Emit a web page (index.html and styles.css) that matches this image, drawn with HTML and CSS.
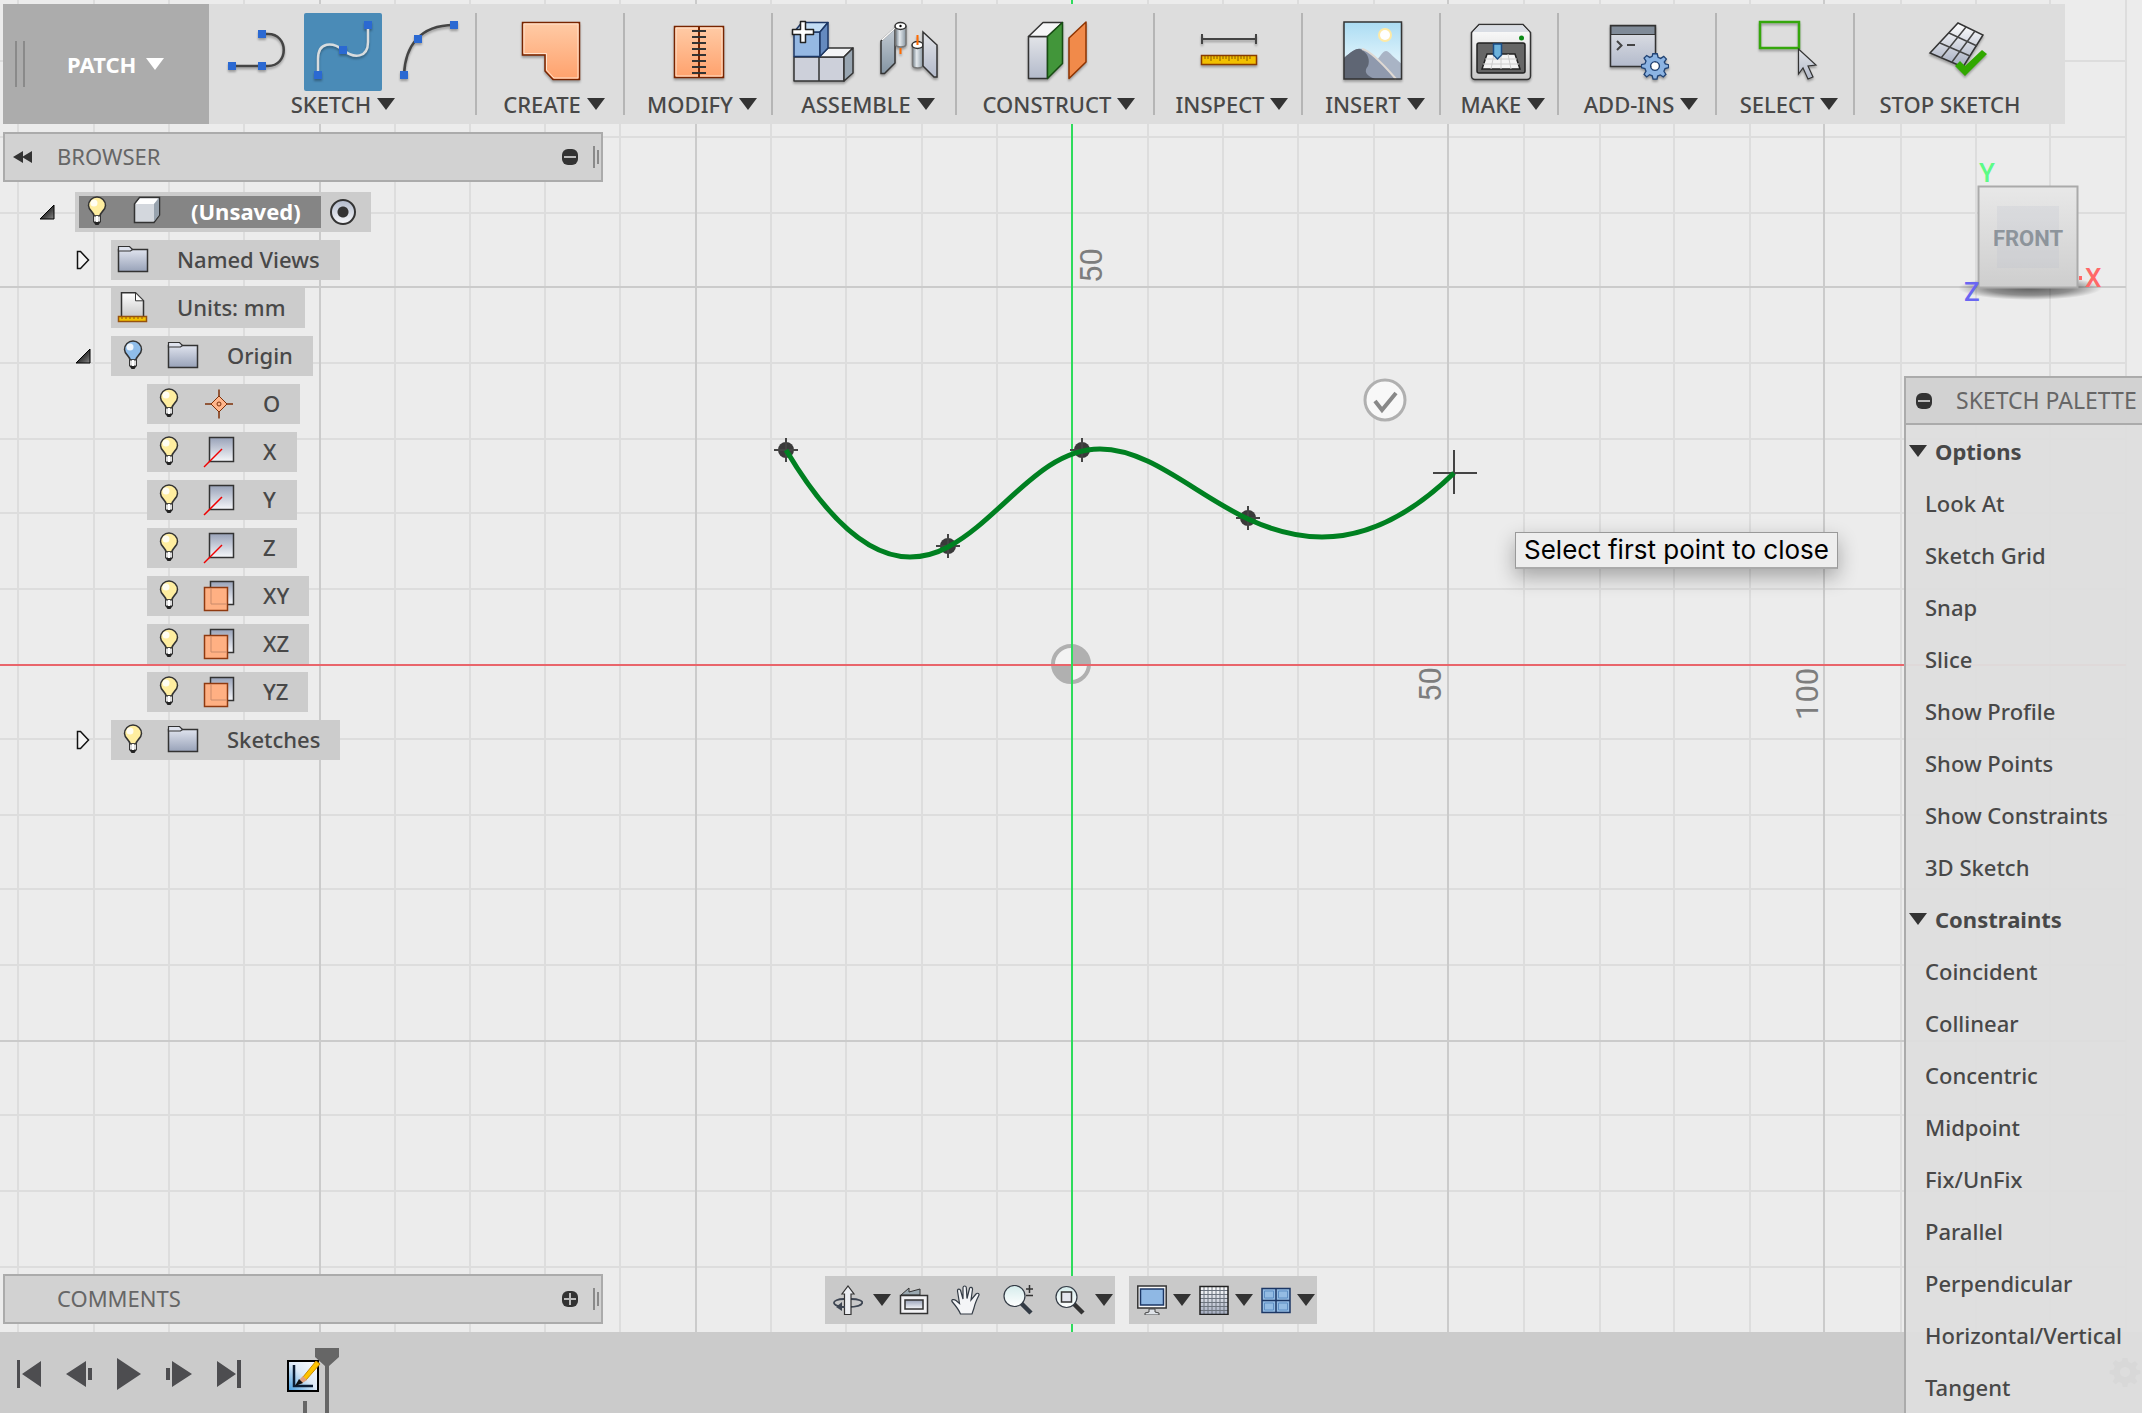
FILE: index.html
```html
<!DOCTYPE html>
<html lang="en">
<head>
<meta charset="utf-8">
<title>(Unsaved) - Patch workspace</title>
<link rel="stylesheet" href="styles.css">
</head>
<body>
<svg class="sprite" aria-hidden="true">
  <defs>
    <linearGradient id="peach" x1="0" y1="0" x2="0" y2="1"><stop offset="0" stop-color="#ffcba6"/><stop offset="1" stop-color="#ffa16c"/></linearGradient>
    <linearGradient id="steel" x1="0" y1="0" x2="0" y2="1"><stop offset="0" stop-color="#dfe3ee"/><stop offset="1" stop-color="#98a2b8"/></linearGradient>
    <linearGradient id="steelup" x1="0" y1="0" x2="0" y2="1"><stop offset="0" stop-color="#98a2b8"/><stop offset="1" stop-color="#f6f7fa"/></linearGradient>
    <linearGradient id="metal" x1="0" y1="0" x2="1" y2="0"><stop offset="0" stop-color="#75828c"/><stop offset=".4" stop-color="#e4e9ed"/><stop offset="1" stop-color="#8795a0"/></linearGradient>
    <linearGradient id="plate" x1="0" y1="0" x2="0" y2="1"><stop offset="0" stop-color="#c4ccd4"/><stop offset="1" stop-color="#8495a3"/></linearGradient>
    <linearGradient id="block" x1="0" y1="0" x2="0" y2="1"><stop offset="0" stop-color="#e2e4e8"/><stop offset="1" stop-color="#b3bacb"/></linearGradient>
    <linearGradient id="mesh" x1="0" y1="0" x2="0" y2="1"><stop offset="0" stop-color="#ffffff"/><stop offset="1" stop-color="#a4acc0"/></linearGradient>
    <linearGradient id="sky" x1="0" y1="0" x2="0" y2="1"><stop offset="0" stop-color="#abdcf3"/><stop offset=".6" stop-color="#d8f0fa"/><stop offset="1" stop-color="#e8f4fb"/></linearGradient>
    <linearGradient id="shell" x1="0" y1="0" x2="0" y2="1"><stop offset="0" stop-color="#ffffff"/><stop offset="1" stop-color="#c9c9c9"/></linearGradient>
    <linearGradient id="cubeface" x1="0" y1="0" x2="0" y2="1"><stop offset="0" stop-color="#e8e8e8"/><stop offset="1" stop-color="#cecece"/></linearGradient>
    <linearGradient id="glass" x1="0" y1="0" x2="0" y2="1"><stop offset="0" stop-color="#d5ecec"/><stop offset="1" stop-color="#ffffff"/></linearGradient>
    <radialGradient id="cubeshade"><stop offset="0" stop-color="#000" stop-opacity=".6"/><stop offset=".6" stop-color="#000" stop-opacity=".4"/><stop offset="1" stop-color="#000" stop-opacity="0"/></radialGradient>
    <linearGradient id="wedge" x1="0" y1="0" x2="1" y2="1"><stop offset=".3" stop-color="#111"/><stop offset="1" stop-color="#888"/></linearGradient>
    <linearGradient id="note" x1="1" y1="0" x2="0" y2="1"><stop offset="0" stop-color="#fff"/><stop offset=".5" stop-color="#dce9f6"/><stop offset="1" stop-color="#3f9be0"/></linearGradient>
  </defs>
  <symbol id="i-bulb" viewBox="0 0 32 32">
    <path d="M13 20C13 16 7.500 14.500 7.500 9.500a8.500 8.500 0 0 1 17 0C24.500 14.500 19 16 19 20z" fill="#ffeea0" stroke="#333" stroke-width="1.500"/>
    <circle cx="13" cy="7" r="3.500" fill="#fff" opacity=".85"/>
    <path d="M12.500 20h7v6h-7z" fill="#ddd" stroke="#333"/><path d="M16 20v6" stroke="#fff" stroke-width="2"/>
    <path d="M12.500 26h7l-2 3h-3z" fill="#222"/>
  </symbol>
  <symbol id="i-bulb-blue" viewBox="0 0 32 32">
    <path d="M13 20C13 16 7.500 14.500 7.500 9.500a8.500 8.500 0 0 1 17 0C24.500 14.500 19 16 19 20z" fill="#8fbdea" stroke="#333" stroke-width="1.500"/>
    <circle cx="13" cy="7" r="3.500" fill="#fff" opacity=".85"/>
    <path d="M12.500 20h7v6h-7z" fill="#ddd" stroke="#333"/><path d="M16 20v6" stroke="#fff" stroke-width="2"/>
    <path d="M12.500 26h7l-2 3h-3z" fill="#222"/>
  </symbol>
  <symbol id="i-folder" viewBox="0 0 32 32">
    <path d="M1.500 27.500V5.500h29v22z" fill="url(#steel)" stroke="#333" stroke-width="1.500"/>
    <path d="M1.500 7V2.500h11l3 3-2 1.500z" fill="#dfe3ee" stroke="#333" stroke-width="1.200"/>
  </symbol>
  <symbol id="i-doc" viewBox="0 0 32 32">
    <path d="M4.500 25V.8h14l8 8V25z" fill="url(#shell)" stroke="#333" stroke-width="1.500"/>
    <path d="M18.500.8v8h8z" fill="#fff" stroke="#333"/>
    <path d="M1.500 24.500h28v5h-28z" fill="#f2c200" stroke="#96520f" stroke-width="1.500"/>
    <path d="M5 25v2m4-2v2m4-2v2m4-2v2m4-2v2m4-2v2" stroke="#96520f"/>
  </symbol>
  <symbol id="i-cube" viewBox="0 0 32 32">
    <path d="M3.500 8l5-6.500h20V19L23 26.500H3.500z" fill="#d3d7dd" stroke="#333" stroke-width="1.500"/>
    <path d="M4.500 8l4.500-5.500h18L23 8z" fill="#fff"/><path d="M23 8l5-6v17l-5 6.500z" fill="#98a3ae"/>
  </symbol>
  <symbol id="i-origin" viewBox="0 0 32 32">
    <path d="M16 1.500v29M2 16h28" stroke="#7e3008" stroke-width="1.500"/>
    <path d="M16 8l8 8-8 8-8-8z" fill="#ffb68c" stroke="#7e3008"/><circle cx="16" cy="16" r="2" fill="none" stroke="#7e3008"/>
  </symbol>
  <symbol id="i-axis" viewBox="0 0 32 32">
    <path d="M6.500 1.500h24v24h-24z" fill="url(#steelup)" stroke="#333" stroke-width="1.500"/>
    <path d="M1 31L19 13" stroke="#f00000" stroke-width="1.500"/>
  </symbol>
  <symbol id="i-plane" viewBox="0 0 32 32">
    <path d="M7.500 1.500h23v23h-23z" fill="url(#steelup)" stroke="#333" stroke-width="1.500"/>
    <path d="M1.500 7.500h23v23h-23z" fill="#ffb083" stroke="#8f3a10" stroke-width="1.500"/>
    <path d="M8 8v16h16" fill="none" stroke="#c98a6a"/>
  </symbol>
  <symbol id="i-gear" viewBox="-16 -16 32 32">
    <path fill-rule="evenodd" d="M-2.500-14h5l1 4 3 1.300L10-11l3 3-2.400 3.500L11.800-2.500l3.700 1v3.500l-4 1-1.300 3L12.500 9.500l-3 3L6 10.200 3 11.500 2.300 15h-4.500l-1-3.800-3-1.200L-9.500 12.500l-3-3 2.200-3.500L-11.500 3l-4-1v-3.500l4-1 1.200-3L-12.500-9l3-3L-6-9.800l2.700-1.200zM0-5a5 5 0 1 0 .01 0z"/>
  </symbol>
  <symbol id="i-caret" viewBox="0 0 18 12"><path d="M0 0h18L9 12z"/></symbol>
</svg>

<div class="app">
  <svg class="viewport" viewBox="0 0 2142 1332" preserveAspectRatio="xMidYMid slice" role="img" aria-label="Sketch canvas">
    <g class="grid-minor" shape-rendering="crispEdges">
      <path d="M18 0V1332M94 0V1332M169 0V1332M244 0V1332M395 0V1332M470 0V1332M545 0V1332M620 0V1332M771 0V1332M846 0V1332M922 0V1332M997 0V1332M1148 0V1332M1223 0V1332M1298 0V1332M1374 0V1332M1524 0V1332M1600 0V1332M1674 0V1332M1750 0V1332M1901 0V1332M1976 0V1332M2050 0V1332M2126 0V1332"/>
      <path d="M0 61H2126M0 137H2126M0 213H2126M0 363H2126M0 439H2126M0 513H2126M0 589H2126M0 739H2126M0 815H2126M0 889H2126M0 965H2126M0 1115H2126M0 1191H2126M0 1267H2126"/>
    </g>
    <path class="grid-major" shape-rendering="crispEdges" d="M320 0V1332M696 0V1332M1448 0V1332M1824 0V1332M0 287H2126M0 1041H2126"/>
    <circle cx="1071" cy="664" r="18" fill="#f3f3f3" stroke="#b0b0b0" stroke-width="4"/>
    <path d="M1072 664V646a18 18 0 0 1 18 18zM1071 664V682a18 18 0 0 1-18-18z" fill="#b0b0b0"/>
    <path class="axis-x" shape-rendering="crispEdges" d="M0 665H2126"/>
    <path class="axis-y" shape-rendering="crispEdges" d="M1072 0V1332"/>
    <g class="axis-label">
      <text transform="translate(1102 283) rotate(-90)">50</text>
      <text transform="translate(1441 702) rotate(-90)">50</text>
      <text transform="translate(1818 720) rotate(-90)">100</text>
    </g>
    <g class="points">
      <circle cx="786" cy="450" r="8"/><circle cx="948" cy="546" r="8"/><circle cx="1082" cy="450" r="8"/><circle cx="1248" cy="518" r="8"/>
      <path d="M774 450h24M786 438v24M936 546h24M948 534v24M1070 450h24M1082 438v24M1236 518h24M1248 506v24M1433 473h44M1454 450v44"/>
    </g>
    <path class="spline" d="M786 450C820 507 862 557 910 557C924 557 937 553 948 547C1002 518 1040 449 1100 449C1150 449 1196 495 1248 519C1274 531 1298 537 1322 537C1370 537 1414 512 1454 473"/>
    <circle cx="1385" cy="400" r="20" fill="#f8f8f8" stroke="#b0b0b0" stroke-width="3"/>
    <path d="M1375 401l7 9 14-17" fill="none" stroke="#888" stroke-width="4"/>
  </svg>

  <header class="toolbar">
    <button class="workspace-switch" type="button"><span class="grip"></span><span>PATCH</span><svg class="caret"><use href="#i-caret"/></svg></button>

    <div class="group">
      <div class="tools">
        <button type="button" aria-label="Line"><svg viewBox="0 0 78 78"><path d="M13 53H49C70 53 70 21 49 21H43" fill="none" stroke="#444" stroke-width="2.500"/><path d="M9 49h8v8H9zM39 49h8v8h-8zM39 17h8v8h-8z" fill="#2b69d2"/></svg></button>
        <button type="button" class="active" aria-label="Spline"><svg viewBox="0 0 78 78"><path d="M14 62V46C14 28 29 29 39 37C50 46 64 45 64 29V12" fill="none" stroke="#d8dcde" stroke-width="2.500"/><path d="M10 58h8v8h-8zM35 33h8v8h-8zM60 8h8v8h-8z" fill="#2b69d2"/></svg></button>
        <button type="button" aria-label="Arc"><svg viewBox="0 0 78 78"><path d="M15 62C16 34 30 12 65 12" fill="none" stroke="#444" stroke-width="2.500"/><path d="M11 58h8v8h-8zM25 22h8v8h-8zM61 8h8v8h-8z" fill="#2b69d2"/></svg></button>
      </div>
      <button class="menu" type="button">SKETCH<svg class="caret"><use href="#i-caret"/></svg></button>
    </div>
    <div class="group">
      <div class="tools"><button type="button" aria-label="Patch"><svg viewBox="0 0 78 78"><path d="M10.500 9.500h57v57H41L33 58V42H10.500z" fill="url(#peach)" stroke="#772400" stroke-width="1.500"/><path d="M12 11h54v54H42l-7.500-8V40.500H12z" fill="none" stroke="#ffe2ce"/></svg></button></div>
      <button class="menu" type="button">CREATE<svg class="caret"><use href="#i-caret"/></svg></button>
    </div>
    <div class="group">
      <div class="tools"><button type="button" aria-label="Stitch"><svg viewBox="0 0 78 78"><path d="M14.500 13.500h49v51h-49z" fill="url(#peach)" stroke="#772400" stroke-width="1.500"/><path d="M16 15h46v48H16z" fill="none" stroke="#ffe2ce"/><path d="M39 13v52" stroke="#772400" stroke-width="2"/><path d="M32 18h14M32 24h14M32 30h14M32 36h14M32 42h14M32 48h14M32 54h14M32 60h14" stroke="#333" stroke-width="2.200"/></svg></button></div>
      <button class="menu" type="button">MODIFY<svg class="caret"><use href="#i-caret"/></svg></button>
    </div>
    <div class="group">
      <div class="tools">
        <button type="button" aria-label="New component"><svg viewBox="0 0 78 78" stroke-linejoin="round"><g stroke="#333" stroke-width="1.500"><path d="M10 44h25v24H10zM35 44h25v24H35z" fill="#cdd0da"/><path d="M35 44l9-9h25l-9 9z" fill="#f3f4f6"/><path d="M60 44l9-9v25l-9 8z" fill="#98a5b1"/></g><g stroke="#1c3765" stroke-width="1.500"><path d="M10 19h26v24.500H10z" fill="#95b8e3"/><path d="M10 19l8-9.500h26L36 19z" fill="#c3ddf4"/><path d="M36 19l8-9.500V35l-8 8.500z" fill="#658abf"/></g><path d="M16.500 8.500h5v8h8v5h-8v8h-5v-8h-8v-5h8z" fill="#fff" stroke="#222" stroke-width="1.500"/></svg></button>
        <button type="button" aria-label="Joint"><svg viewBox="0 0 78 78"><g stroke="#333" stroke-width="1.500"><path d="M12 28L26 15V50L15.500 60.500H12z" fill="url(#plate)"/><path d="M13 27L26 15" stroke="#fff"/><path d="M26.500 13v18c0 4 10.500 4 10.500 0V13" fill="url(#metal)" stroke="#777"/><ellipse cx="31.500" cy="13" rx="5.500" ry="3.500" fill="#fff"/><path d="M43.500 32v20c0 4 10.500 4 10.500 0V32" fill="url(#metal)" stroke="#777"/><ellipse cx="48.500" cy="32" rx="5.500" ry="3.500" fill="#fff"/><path d="M54 19L68 32V64H65L54 53z" fill="url(#block)"/></g><circle cx="31.500" cy="13" r="1.200"/><path d="M31.500 35v6M48.500 22v10" stroke="#ff6a00" stroke-width="2"/></svg></button>
      </div>
      <button class="menu" type="button">ASSEMBLE<svg class="caret"><use href="#i-caret"/></svg></button>
    </div>
    <div class="group">
      <div class="tools"><button type="button" aria-label="Offset plane"><svg viewBox="0 0 78 78" stroke-linejoin="round"><g stroke="#333" stroke-width="1.500"><path d="M11.500 23.500h19v42h-19z" fill="url(#block)"/><path d="M11.500 23.500L26 9.500h19.500l-15 14z" fill="#f5f6f7"/><path d="M30.500 23.500l15-14v41l-15 15z" fill="#42963a" stroke="#174c13"/></g><path d="M52 25L69 9v40L52 65.500z" fill="#f18a4a" stroke="#8e3300" stroke-width="1.500"/></svg></button></div>
      <button class="menu" type="button">CONSTRUCT<svg class="caret"><use href="#i-caret"/></svg></button>
    </div>
    <div class="group">
      <div class="tools"><button type="button" aria-label="Measure"><svg viewBox="0 0 78 78"><path d="M12 26h54M12 21v10M66 21v10" stroke="#444" stroke-width="2"/><path d="M11.500 42.500h55v9h-55z" fill="#f2c000" stroke="#8a3c00" stroke-width="1.500"/><path d="M15 43v3m3-3v3m3-3v5m3-5v3m3-3v3m3-3v5m3-5v3m3-3v3m3-3v5m3-5v3m3-3v3m3-3v5m3-5v3m3-3v3m3-3v5m3-5v3" stroke="#8a5a00"/></svg></button></div>
      <button class="menu" type="button">INSPECT<svg class="caret"><use href="#i-caret"/></svg></button>
    </div>
    <div class="group">
      <div class="tools"><button type="button" aria-label="Attached canvas"><svg viewBox="0 0 78 78"><path d="M11 9h58v57H11z" fill="url(#sky)"/><circle cx="52" cy="22" r="7" fill="#ffeaa5"/><circle cx="52" cy="22" r="5" fill="#fff"/><path d="M42 50C48 42 50 38 53 38C56 38 62 46 69 51V66H48z" fill="#a9b4c5"/><path d="M11 45C19 38 24 35 29 36C36 37 50 51 62 66H11z" fill="#8f99ad"/><path d="M11 45C19 38 24 35 27 36C36 40 37 48 35 53C31 58 32 62 42 66H11z" fill="#5f6674"/><path d="M29 36C36 37 50 51 63 66" stroke="#dfd9d3" stroke-width="2" fill="none"/><path d="M11 9h57.500v57H11z" fill="none" stroke="#333" stroke-width="1.500"/></svg></button></div>
      <button class="menu" type="button">INSERT<svg class="caret"><use href="#i-caret"/></svg></button>
    </div>
    <div class="group">
      <div class="tools"><button type="button" aria-label="3D print"><svg viewBox="0 0 78 78"><path d="M18 11.500h44l7.500 8V63a3.500 3.500 0 0 1-3.500 3.500H14A3.500 3.500 0 0 1 10.500 63V19.500z" fill="url(#shell)" stroke="#333" stroke-width="1.500"/><path d="M12 19l6.500-6.500h43L68 19z" fill="#d9dde4"/><circle cx="60.500" cy="25" r="2.500" fill="#0a8a14"/><rect x="16" y="30" width="48" height="30" rx="2" fill="#666" stroke="#222" stroke-width="1.500"/><path d="M26 41h28l5 15H21z" fill="#f3f3f3" stroke="#222" stroke-width="1.500"/><path d="M24 46h32M22 51h36M33 41l-3 15M40 41v15M47 41l3 15" stroke="#ccc"/><path d="M32.500 31h8v11l-4 4-4-4z" fill="#6cb2dc" stroke="#1a4e86" stroke-width="1.500"/></svg></button></div>
      <button class="menu" type="button">MAKE<svg class="caret"><use href="#i-caret"/></svg></button>
    </div>
    <div class="group">
      <div class="tools"><button type="button" aria-label="Scripts and add-ins"><svg viewBox="0 0 78 78"><path d="M11.500 12.500h45v41h-45z" fill="url(#block)" stroke="#333" stroke-width="1.500"/><path d="M12 13h44v8.500H12z" fill="#808b98" stroke="#333"/><path d="M18 28l4.500 4.500L18 37M28 32h8" fill="none" stroke="#444" stroke-width="2"/><use href="#i-gear" x="42" y="39" width="28" height="28" fill="#8cb4e3" stroke="#214374" stroke-width="1.500"/><circle cx="56" cy="53" r="3.500" fill="#fff"/></svg></button></div>
      <button class="menu" type="button">ADD-INS<svg class="caret"><use href="#i-caret"/></svg></button>
    </div>
    <div class="group">
      <div class="tools"><button type="button" aria-label="Select"><svg viewBox="0 0 78 78"><path d="M13 9h39v26H13z" fill="none" stroke="#35a70c" stroke-width="2.500"/><path d="M51.500 36L69 52l-8 1 5 11-5 2-5-11-4.500 6z" fill="url(#block)" stroke="#333" stroke-width="1.200"/></svg></button></div>
      <button class="menu" type="button">SELECT<svg class="caret"><use href="#i-caret"/></svg></button>
    </div>
    <div class="group last">
      <div class="tools"><button type="button" aria-label="Stop sketch"><svg viewBox="0 0 78 78"><path d="M47 10l25 12-20 32-33-14z" fill="url(#mesh)" stroke="#333" stroke-width="1.500"/><path d="M38 20l28 13M29 30l30 13M55 14L30 45M64 18L41 49" stroke="#444" stroke-width="1.500"/><path d="M44 53l5-5 5 5 17-16 5 4-22 22z" fill="#31a800"/></svg></button></div>
      <button class="menu" type="button">STOP SKETCH</button>
    </div>
  </header>

  <main class="workspace">
    <section class="browser" aria-label="Browser">
      <div class="panel-bar">
        <button type="button" class="collapse" aria-label="Collapse"><svg width="19" height="12" viewBox="0 0 19 12"><path d="M10 0v12L0 6zM19 0v12L9 6z" fill="#333"/></svg></button>
        <h2>BROWSER</h2>
        <button type="button" class="round" aria-label="Minimize"><svg viewBox="0 0 16 16"><rect width="16" height="16" rx="6" fill="#333"/><path d="M2 8h12" stroke="#bbb" stroke-width="2"/></svg></button>
        <span class="edge"></span>
      </div>
      <ul class="tree">
        <li>
          <div class="row"><button class="twist" type="button" aria-label="Collapse"><svg width="16" height="16"><path d="M15 1v14H1z" fill="url(#wedge)" stroke="#000"/></svg></button>
            <label class="node root"><span class="root-name"><svg><use href="#i-bulb"/></svg><svg><use href="#i-cube"/></svg><span class="name">(Unsaved)</span></span><input type="radio" name="active" checked></label></div>
          <ul>
            <li><div class="row"><button class="twist" type="button" aria-label="Expand"><svg width="16" height="20"><path d="M2.500 1.500h3l8 8.500-8 8.500h-3z" fill="#f4f4f4" stroke="#111" stroke-width="1.500"/></svg></button><div class="node"><svg><use href="#i-folder"/></svg><span class="name">Named Views</span></div></div></li>
            <li><div class="row"><span class="twist"></span><div class="node"><svg><use href="#i-doc"/></svg><span class="name">Units: mm</span></div></div></li>
            <li><div class="row"><button class="twist" type="button" aria-label="Collapse"><svg width="16" height="16"><path d="M15 1v14H1z" fill="url(#wedge)" stroke="#000"/></svg></button><div class="node"><svg><use href="#i-bulb-blue"/></svg><svg><use href="#i-folder"/></svg><span class="name">Origin</span></div></div>
              <ul>
                <li><div class="node"><svg><use href="#i-bulb"/></svg><svg><use href="#i-origin"/></svg><span class="name">O</span></div></li>
                <li><div class="node"><svg><use href="#i-bulb"/></svg><svg><use href="#i-axis"/></svg><span class="name">X</span></div></li>
                <li><div class="node"><svg><use href="#i-bulb"/></svg><svg><use href="#i-axis"/></svg><span class="name">Y</span></div></li>
                <li><div class="node"><svg><use href="#i-bulb"/></svg><svg><use href="#i-axis"/></svg><span class="name">Z</span></div></li>
                <li><div class="node"><svg><use href="#i-bulb"/></svg><svg><use href="#i-plane"/></svg><span class="name">XY</span></div></li>
                <li><div class="node"><svg><use href="#i-bulb"/></svg><svg><use href="#i-plane"/></svg><span class="name">XZ</span></div></li>
                <li><div class="node"><svg><use href="#i-bulb"/></svg><svg><use href="#i-plane"/></svg><span class="name">YZ</span></div></li>
              </ul>
            </li>
            <li><div class="row"><button class="twist" type="button" aria-label="Expand"><svg width="16" height="20"><path d="M2.500 1.500h3l8 8.500-8 8.500h-3z" fill="#f4f4f4" stroke="#111" stroke-width="1.500"/></svg></button><div class="node"><svg><use href="#i-bulb"/></svg><svg><use href="#i-folder"/></svg><span class="name">Sketches</span></div></div></li>
          </ul>
        </li>
      </ul>
    </section>

    <div class="dock">
      <div class="panel-bar">
        <span class="collapse"></span>
        <h2>COMMENTS</h2>
        <button type="button" class="round" aria-label="Expand"><svg viewBox="0 0 16 16"><rect width="16" height="16" rx="6" fill="#333"/><path d="M2 8h12M8 2v12" stroke="#bbb" stroke-width="2"/></svg></button>
        <span class="edge"></span>
      </div>
      <nav class="view-tools" aria-label="View">
        <div class="view-set">
          <button type="button" class="split" aria-label="Orbit"><svg class="icon" viewBox="0 0 30 30"><path d="M18 14C34 14 33 22 15 22C-4 22-2 14 11 14" fill="none" stroke="#3d4552" stroke-width="1.800"/><path d="M11.500 29.500V9H9l6-8 6 8h-3v20.500z" fill="#eceef2" stroke="#333" stroke-width="1.200"/><path d="M12 22h-4" stroke="#3d4552" stroke-width="1.800"/><path d="M9 17v9l-6-4z" fill="#3d4552"/></svg><svg class="caret"><use href="#i-caret"/></svg></button>
          <button type="button" aria-label="Look at"><svg class="icon" viewBox="0 0 30 30"><path d="M2 10L10 3v4l11-3v6z" fill="#9aa8b0" stroke="#333"/><path d="M1.500 10.500h27v18h-27z" fill="#f2f2f4" stroke="#333" stroke-width="1.500"/><path d="M6 15h18v9H6z" fill="url(#steelup)" stroke="#333" stroke-width="1.500"/></svg></button>
          <button type="button" aria-label="Pan"><svg class="icon" viewBox="0 0 30 30"><path d="M9.500 29C8 25 4 20 1 16.500C0 14.500 3 14 5 15.500L8.500 18.500L6.500 6C6.300 3.500 9 3.500 9.600 5.500L12 14V2.500C12.300.5 15 .5 15.300 2.500L16 13.500L18.500 3.500C19 1.500 21.800 2.300 21.500 4.500L20 15L25 9C26.500 7.500 28.800 8.500 27.800 10.500C26 14 24 18 23 23L21 29z" fill="#f4f5f7" stroke="#333b45" stroke-width="1.200"/></svg></button>
          <button type="button" aria-label="Zoom"><svg class="icon" viewBox="0 0 30 30"><path d="M18 18l10 10" stroke="#333b45" stroke-width="4.500"/><circle cx="11.500" cy="11" r="10.500" fill="url(#glass)" stroke="#333b45" stroke-width="1.200"/><path d="M23 4h7M26.500 0v8M23 10.500h7" stroke="#333" stroke-width="1.500"/></svg></button>
          <button type="button" class="split" aria-label="Zoom window"><svg class="icon" viewBox="0 0 30 30"><path d="M18 18l10 10" stroke="#333" stroke-width="4.500"/><circle cx="11.500" cy="12" r="10.500" fill="url(#glass)" stroke="#333b45" stroke-width="1.200"/><path d="M6.500 7h10v10h-10z" fill="#e3e5ee" stroke="#333" stroke-width="1.500"/></svg><svg class="caret"><use href="#i-caret"/></svg></button>
        </div>
        <div class="view-set">
          <button type="button" class="split" aria-label="Display settings"><svg class="icon" viewBox="0 0 30 30"><path d="M.8 1h28.400v22H.8z" fill="#f7f7f7" stroke="#333" stroke-width="1.500"/><path d="M3.500 4h23v16h-23z" fill="#8fb8e4" stroke="#1c3765" stroke-width="1.500"/><path d="M12 24h6v3l4 1v2H8v-2l4-1z" fill="#dfe3e8" stroke="#444"/></svg><svg class="caret"><use href="#i-caret"/></svg></button>
          <button type="button" class="split" aria-label="Grid and snaps"><svg class="icon" viewBox="0 0 30 30"><path d="M1 1.500h28v28H1z" fill="url(#mesh)"/><path d="M1 5.500h28M1 9.500h28M1 13.500h28M1 17.500h28M1 21.500h28M1 25.500h28M5 1v28M9 1v28M13 1v28M17 1v28M21 1v28M25 1v28" stroke="#6d747f" stroke-width="1"/><path d="M1 1.500h28v28H1z" fill="none" stroke="#222" stroke-width="1.500"/></svg><svg class="caret"><use href="#i-caret"/></svg></button>
          <button type="button" class="split" aria-label="Viewports"><svg class="icon" viewBox="0 0 30 30"><path d="M1 3.500h28v24H1z" fill="#94bce3" stroke="#1c3765" stroke-width="1.500"/><path d="M15 3.500v24M1 15.500h28" stroke="#1c3765" stroke-width="1.500"/><path d="M3.500 6h9v7h-9zM17.500 6h9v7h-9zM3.500 18h9v7h-9zM17.500 18h9v7h-9z" fill="none" stroke="#5f8fc4"/></svg><svg class="caret"><use href="#i-caret"/></svg></button>
        </div>
      </nav>
    </div>
  </main>

  <aside class="side">
    <svg class="viewcube" viewBox="0 0 238 252" role="img" aria-label="View cube, front">
      <ellipse cx="126" cy="164" rx="72" ry="12" fill="url(#cubeshade)"/>
      <path d="M74.500 62.500h99v101h-99z" fill="url(#cubeface)" stroke="#aaa" stroke-width="2"/>
      <path d="M93 82h62v62H93z" fill="#b9bfcb" opacity=".22"/>
      <text class="face" x="124" y="122" text-anchor="middle">FRONT</text>
      <text class="letter" x="75" y="58" fill="#5dfb86">Y</text>
      <text class="letter" x="181" y="163" fill="#ff6868">X</text>
      <path d="M175 152h3v4h-3z" fill="#ff6868"/>
      <text class="letter" x="60" y="177" fill="#6a66f2">Z</text>
    </svg>
    <section class="palette" aria-label="Sketch palette">
      <header><button type="button" class="round" aria-label="Minimize"><svg viewBox="0 0 16 16"><rect width="16" height="16" rx="6" fill="#333"/><path d="M2 8h12" stroke="#bbb" stroke-width="2"/></svg></button><h2>SKETCH PALETTE</h2></header>
      <button type="button" class="section"><svg class="caret"><use href="#i-caret"/></svg>Options</button>
      <button type="button">Look At</button>
      <button type="button">Sketch Grid</button>
      <button type="button">Snap</button>
      <button type="button">Slice</button>
      <button type="button">Show Profile</button>
      <button type="button">Show Points</button>
      <button type="button">Show Constraints</button>
      <button type="button">3D Sketch</button>
      <button type="button" class="section"><svg class="caret"><use href="#i-caret"/></svg>Constraints</button>
      <button type="button">Coincident</button>
      <button type="button">Collinear</button>
      <button type="button">Concentric</button>
      <button type="button">Midpoint</button>
      <button type="button">Fix/UnFix</button>
      <button type="button">Parallel</button>
      <button type="button">Perpendicular</button>
      <button type="button">Horizontal/Vertical</button>
      <button type="button">Tangent</button>
    </section>
  </aside>

  <footer class="timeline">
    <div class="transport">
      <button type="button" aria-label="Go to start"><svg viewBox="0 0 26 32"><path d="M1 2h3v28H1zM25 3v26L6 16z"/></svg></button>
      <button type="button" aria-label="Step back"><svg viewBox="0 0 26 32"><path d="M22 10h4v12h-4zM20 3v26L0 16z"/></svg></button>
      <button type="button" aria-label="Play"><svg viewBox="0 0 26 32"><path d="M1 0v32L25 16z"/></svg></button>
      <button type="button" aria-label="Step forward"><svg viewBox="0 0 26 32"><path d="M0 10h4v12H0zM6 3v26l20-13z"/></svg></button>
      <button type="button" aria-label="Go to end"><svg viewBox="0 0 26 32"><path d="M21 2h4v28h-4zM1 3v26l19-13z"/></svg></button>
    </div>
    <button class="feature" type="button" aria-label="Sketch1"><svg width="54" height="65" viewBox="0 0 54 65"><path d="M1 13h30v30H1z" fill="url(#note)" stroke="#000" stroke-width="2"/><path d="M7 17v21h19" fill="none" stroke="#0b1c33" stroke-width="2.500"/><path d="M16 29l13-16 4 3-14 16z" fill="#ffc400" stroke="#c98a00"/><path d="M12 32l4-4 4 4-6 4z" fill="#e0a07c"/><path d="M8 38l4-7 4 4z" fill="#111"/><path d="M16 53h4v12h-4z" fill="#666"/><path d="M28 0h24v9L42 18v47h-4V18L28 9z" fill="#666"/></svg></button>
    <button class="settings" type="button" aria-label="Timeline settings"><svg width="32" height="32"><use href="#i-gear"/></svg></button>
  </footer>

  <div class="hint" role="tooltip">Select first point to close</div>
</div>
</body>
</html>
```

FILE: styles.css
```css
* { box-sizing: border-box; }

body {
  margin: 0;
  background: #ececec;
  color: #484848;
  font: 500 22px/28px "Noto Sans", "Open Sans", sans-serif;
}

button {
  margin: 0;
  padding: 0;
  border: 0;
  background: none;
  color: inherit;
  font: inherit;
}

h2 {
  margin: 0;
  padding-bottom: 2px;
  color: #666;
  font-size: 22px;
  font-weight: 400;
  white-space: nowrap;
}

ul {
  margin: 0;
  padding: 0;
  list-style: none;
}

svg { display: block; }

.sprite {
  position: absolute;
  width: 0;
  height: 0;
}

.app {
  position: relative;
  display: grid;
  grid-template-columns: minmax(0, 1fr) 238px;
  grid-template-rows: auto minmax(0, 1fr) 81px;
  min-height: 100vh;
  overflow: hidden;
}

.caret {
  flex: none;
  width: 18px;
  height: 12px;
  fill: #333;
}

/* Drawing canvas behind the panels */
.viewport {
  position: absolute;
  top: 0;
  left: 0;
  width: 100%;
  height: calc(100% - 81px);
}

.grid-minor { stroke: #dddddd; stroke-width: 2; }
.grid-major { stroke: #cbcbcb; stroke-width: 2; }
.axis-x { stroke: #e9656b; stroke-width: 2; }
.axis-y { stroke: #2edb5c; stroke-width: 2; }

.axis-label {
  fill: #7d7d7d;
  font: 400 31px "Liberation Sans Narrow", Roboto, sans-serif;
}

.points { fill: #3a3a3a; stroke: #444; stroke-width: 2; }
.points circle { stroke: none; }
.spline { fill: none; stroke: #008021; stroke-width: 5; }

/* Toolbar */
.toolbar {
  position: relative;
  grid-column: 1 / -1;
  display: grid;
  grid-template-columns: 206px 268px 148px 148px 184px 198px 148px 138px 118px 158px 138px 210px;
  justify-self: start;
  height: 120px;
  margin: 4px 0 0 3px;
  background: #dddddd;
}

.workspace-switch {
  display: flex;
  align-items: center;
  gap: 10px;
  padding-left: 12px;
  background: #acacac;
  color: #fff;
  font-weight: 700;
}

.workspace-switch .caret { fill: #fff; }

.grip {
  width: 10px;
  height: 46px;
  margin-right: 32px;
  border: solid #8a8a8a;
  border-width: 0 2px;
}

.group {
  display: flex;
  flex-direction: column;
  align-items: center;
  padding-top: 9px;
  background: linear-gradient(#b5b5b5, #b5b5b5) right 9px / 2px 102px no-repeat;
}

.group.last {
  padding-right: 20px;
  background: none;
}

.tools {
  display: flex;
  gap: 7px;
}

.tools button {
  width: 78px;
  height: 78px;
  border-radius: 2px;
}

.tools svg { filter: drop-shadow(0 2px 1px rgba(0, 0, 0, .3)); }
.tools .active { background: #4a8bb7; }

.menu {
  display: flex;
  align-items: center;
  gap: 6px;
  line-height: 26px;
  white-space: nowrap;
}

.group + .group:not(.last) .menu { padding-left: 6px; }

/* Workspace */
.workspace {
  position: relative;
  grid-row: 2;
  grid-column: 1 / -1;
  display: flex;
  flex-direction: column;
  justify-content: space-between;
  padding: 8px 3px;
}

.panel-bar {
  display: flex;
  align-items: center;
  width: 600px;
  height: 50px;
  padding: 0 2px 0 8px;
  border: 2px solid #ababab;
  background: #d2d2d2;
}

.panel-bar h2 { flex: 1; }
.collapse { width: 44px; }

.round {
  width: 16px;
  height: 16px;
}

.edge {
  width: 6px;
  height: 22px;
  margin-left: 15px;
  border-left: 2px solid #8a8a8a;
  background: linear-gradient(#8a8a8a, #8a8a8a) right center / 2px 14px no-repeat;
}

.tree {
  margin: 10px 0 0 36px;
}

.tree ul { padding-left: 36px; }
.tree ul ul { padding-left: 72px; }
.row { display: flex; }

.twist {
  display: flex;
  align-items: center;
  width: 36px;
  height: 40px;
}

.node {
  display: flex;
  align-items: center;
  gap: 18px;
  width: max-content;
  min-width: 150px;
  height: 40px;
  margin-bottom: 8px;
  padding: 0 20px 0 6px;
  background: #cccccc;
}

.node svg {
  width: 32px;
  height: 32px;
}

.name {
  margin-left: 10px;
  padding-bottom: 2px;
}

.root {
  gap: 9px;
  padding: 4px 15px 4px 4px;
}

.root-name {
  display: flex;
  align-items: center;
  gap: 18px;
  height: 32px;
  padding: 0 20px 0 2px;
  background: #858585;
  color: #fff;
  font-weight: 700;
}

.root input {
  appearance: none;
  width: 26px;
  height: 26px;
  margin: 0;
  border: 2px solid #333;
  border-radius: 50%;
  background: radial-gradient(circle, #333 0 5px, transparent 6px), linear-gradient(#b4bccd, #f4f5f8);
}

.dock {
  display: grid;
  grid-template-columns: minmax(0, 1fr) auto minmax(0, 1fr);
  align-items: end;
}

.view-tools {
  display: flex;
  gap: 14px;
}

.view-set {
  display: flex;
  align-items: center;
  gap: 22px;
  height: 48px;
  padding: 0 2px 0 8px;
  background: #c9c9c9;
}

.view-set + .view-set { gap: 8px; }
.icon { width: 30px; height: 30px; }

.split {
  display: flex;
  align-items: center;
  gap: 6px;
}

.view-set:first-child .split { gap: 10px; }
.view-set:first-child .split:first-child { margin-right: -14px; }

/* View cube and palette */
.side {
  position: relative;
  grid-row: 2 / 4;
  grid-column: 2;
  z-index: 2;
}

.viewcube {
  width: 238px;
  height: 252px;
}

.face {
  fill: #8d949b;
  font: 700 22px "Liberation Sans Narrow", Roboto, sans-serif;
}

.letter { font: 500 26px "Liberation Sans Narrow", Roboto, sans-serif; }

.palette {
  display: flex;
  flex-direction: column;
  border-left: 2px solid #ababab;
  background: rgba(222, 222, 222, .96);
}

.palette header {
  display: flex;
  align-items: center;
  gap: 24px;
  height: 49px;
  padding-left: 10px;
  border: solid #ababab;
  border-width: 2px 0;
  background: #d2d2d2;
}

.palette h2 { font-size: 23px; }

.palette > button {
  height: 52px;
  padding-left: 19px;
  text-align: left;
  white-space: nowrap;
}

.palette .section {
  display: flex;
  align-items: center;
  gap: 8px;
  padding-left: 3px;
  font-weight: 700;
}

/* Timeline */
.timeline {
  position: relative;
  grid-row: 3;
  grid-column: 1 / -1;
  display: flex;
  align-items: flex-end;
  padding: 0 1px 0 16px;
  background: #cbcbcb;
}

.transport {
  display: flex;
  gap: 24px;
  padding-bottom: 23px;
}

.transport svg {
  width: 26px;
  height: 32px;
  fill: #4d4d50;
}

.feature { margin-left: 45px; }

.settings {
  margin-left: auto;
  padding-bottom: 25px;
  fill: #555;
}

/* Pointer hint */
.hint {
  position: absolute;
  top: 532px;
  left: calc(50% + 444px);
  padding: 2px 8px 3px;
  border: 1px solid #999;
  border-bottom: 2px solid #aaa;
  background: #eeeeee;
  box-shadow: 0 8px 20px rgba(0, 0, 0, .3);
  color: #000;
  font: 400 26px/29px Inter, sans-serif;
  white-space: nowrap;
}
```
